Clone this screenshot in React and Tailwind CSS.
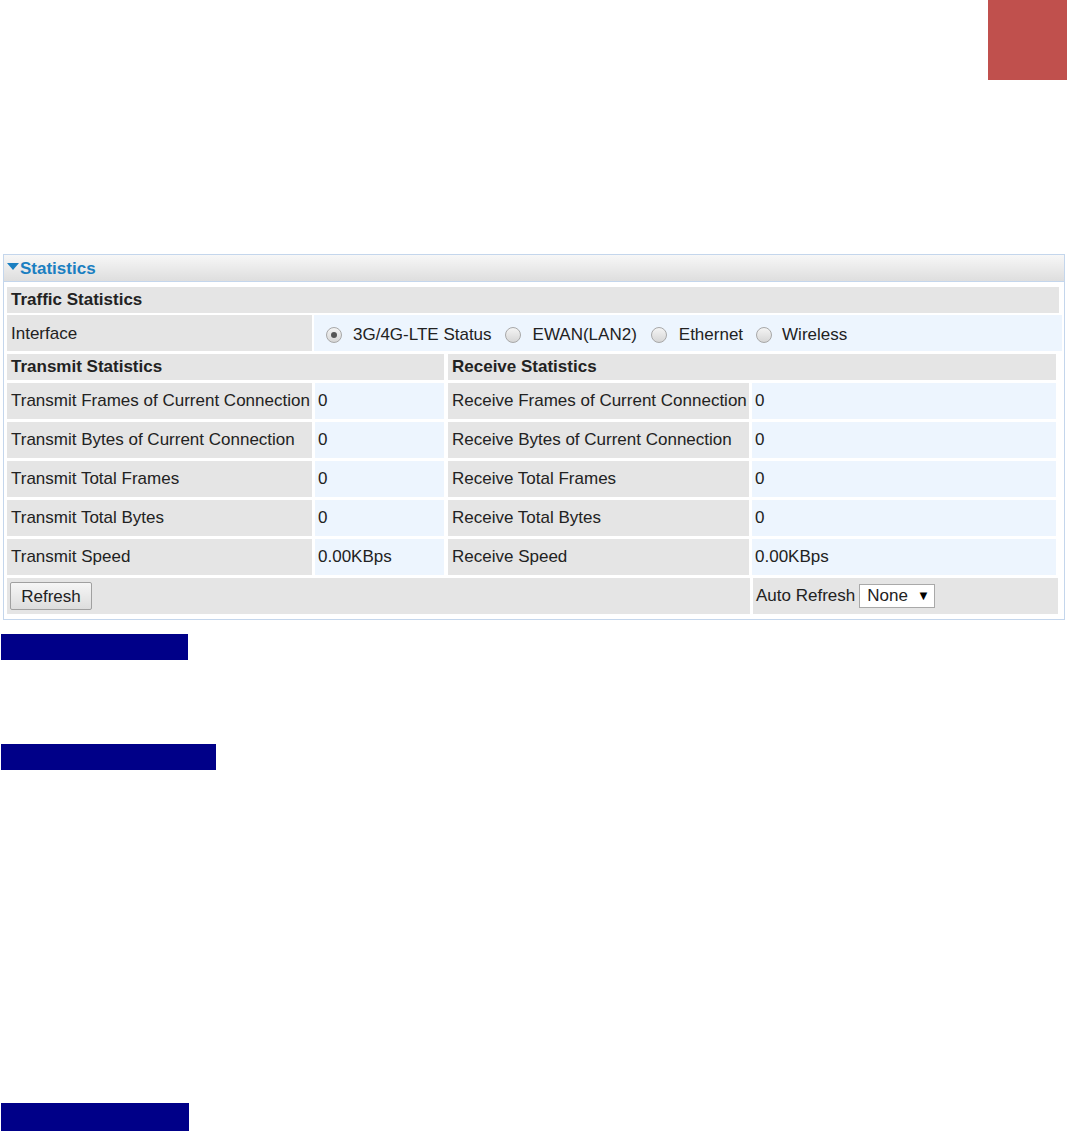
import React from "react";

const font = { fontFamily: '"Liberation Sans", Arial, sans-serif' };

function Radio({ checked }) {
  return (
    <span className="inline-flex items-center justify-center w-[16px] h-[16px] rounded-full border border-[#a8a8a8] bg-gradient-to-b from-[#f4f4f4] to-[#d6d6d6] shrink-0">
      {checked && <span className="w-[6px] h-[6px] rounded-full bg-[#555]" />}
    </span>
  );
}

const rows = [
  ["Transmit Frames of Current Connection", "0", "Receive Frames of Current Connection", "0"],
  ["Transmit Bytes of Current Connection", "0", "Receive Bytes of Current Connection", "0"],
  ["Transmit Total Frames", "0", "Receive Total Frames", "0"],
  ["Transmit Total Bytes", "0", "Receive Total Bytes", "0"],
  ["Transmit Speed", "0.00KBps", "Receive Speed", "0.00KBps"],
];

export default function App() {
  return (
    <div className="bg-white w-[1067px] h-[1132px] overflow-hidden text-[17px] text-[#222]" style={font}>
      <div className="flex justify-end h-[80px]">
        <div className="w-[79px] h-[80px] bg-[#c0504d]" />
      </div>
      <div className="ml-[3px] mt-[174px] w-[1062px] border border-[#c4d6ec]">
        <div className="h-[27px] flex items-center pl-[3px] bg-gradient-to-b from-[#f7f7f7] to-[#dedede] border-b border-[#c4d6ec]">
          <svg width="12" height="8" viewBox="0 0 12 8" className="mr-[1px] mb-[3px]">
            <polygon points="0,0 12,0 6,7" fill="#1a7fc1" />
          </svg>
          <span className="font-bold text-[#1a7fc1] leading-none">Statistics</span>
        </div>
        <div className="pl-[3px] pt-[5px] pb-[5px] flex flex-col">
          <div className="w-[1052px] h-[26px] bg-[#e5e5e5] flex items-center pl-[4px] font-bold">Traffic Statistics</div>
          <div className="mt-[2px] flex h-[36px] gap-[2px]">
            <div className="w-[305px] bg-[#e5e5e5] pl-[4px] pt-[6px]">Interface</div>
            <div className="w-[748px] bg-[#edf5fe] flex items-center pl-[12px] pt-[4px]">
              <Radio checked />
              <span className="ml-[11px] mr-[13px]">3G/4G-LTE Status</span>
              <Radio />
              <span className="ml-[12px] mr-[14px]">EWAN(LAN2)</span>
              <Radio />
              <span className="ml-[12px] mr-[13px]">Ethernet</span>
              <Radio />
              <span className="ml-[10px]">Wireless</span>
            </div>
          </div>
          <div className="mt-[3px] flex h-[26px] gap-[4px]">
            <div className="w-[437px] bg-[#e5e5e5] flex items-center pl-[4px] font-bold">Transmit Statistics</div>
            <div className="w-[608px] bg-[#e5e5e5] flex items-center pl-[4px] font-bold">Receive Statistics</div>
          </div>
          {rows.map((r, i) => (
            <div key={i} className="mt-[3px] flex h-[36px]">
              <div className="w-[305px] bg-[#e5e5e5] flex items-center pl-[4px] whitespace-nowrap overflow-hidden">{r[0]}</div>
              <div className="ml-[3px] w-[129px] bg-[#edf5fe] flex items-center pl-[3px]">{r[1]}</div>
              <div className="ml-[4px] w-[301px] bg-[#e5e5e5] flex items-center pl-[4px] whitespace-nowrap overflow-hidden">{r[2]}</div>
              <div className="ml-[3px] w-[304px] bg-[#edf5fe] flex items-center pl-[3px]">{r[3]}</div>
            </div>
          ))}
          <div className="mt-[3px] flex h-[36px]">
            <div className="w-[743px] bg-[#e5e5e5] flex items-center pl-[3px]">
              <button className="w-[82px] h-[28px] border border-[#a0a0a0] rounded-[2px] bg-gradient-to-b from-[#f6f6f6] to-[#dddddd] text-[17px] text-[#222] leading-none" style={font}>
                Refresh
              </button>
            </div>
            <div className="ml-[3px] w-[305px] bg-[#e5e5e5] flex items-center pl-[3px]">
              <span>Auto Refresh</span>
              <span className="ml-[4px] w-[76px] h-[24px] border border-[#a9a9a9] bg-white flex items-center pl-[7px]">
                <span>None</span>
                <span className="ml-[9px] text-[13px] text-black">▼</span>
              </span>
            </div>
          </div>
        </div>
      </div>
      <div className="mt-[14px] ml-[1px] w-[187px] h-[26px] bg-[#000088]" />
      <div className="mt-[84px] ml-[1px] w-[215px] h-[26px] bg-[#000088]" />
      <div className="mt-[333px] ml-[1px] w-[188px] h-[28px] bg-[#000088]" />
    </div>
  );
}
